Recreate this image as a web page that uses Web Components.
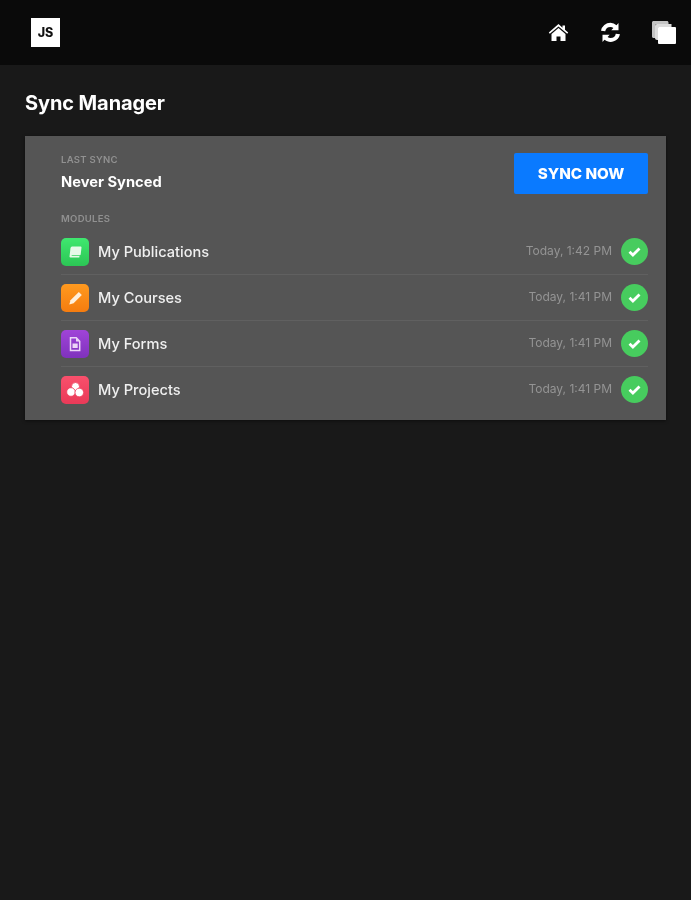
<!DOCTYPE html>
<html lang="en">
  <head>
    <meta charset="UTF-8" />
    <title>Sync Manager</title>
    <style>
      html, body { margin: 0; background: #191919; }
      body { font-family: Inter, "Liberation Sans", sans-serif; color: #fff; height: 900px; overflow: hidden; }
      app-header, sync-page { filter: blur(0.6px); }
    </style>
  </head>
  <body>
    <app-header></app-header>
    <sync-page title-text="Sync Manager">
      <sync-card last-sync="Never Synced">
        <module-row label="My Publications" time="Today, 1:42 PM" icon="book" tint="green"></module-row>
        <module-row label="My Courses" time="Today, 1:41 PM" icon="pencil" tint="orange"></module-row>
        <module-row label="My Forms" time="Today, 1:41 PM" icon="form" tint="purple"></module-row>
        <module-row label="My Projects" time="Today, 1:41 PM" icon="projects" tint="red"></module-row>
      </sync-card>
    </sync-page>

    <script>
      class AppHeader extends HTMLElement {
        constructor() {
          super()
          const shadow = this.attachShadow({ mode: "open" })
          shadow.innerHTML = `
            <style>
              :host { display: flex; align-items: center; justify-content: space-between; height: 65px; padding: 0 15px 0 31px; background: #0a0a0a; }
              .logo { width: 29px; height: 29px; background: #fff; color: #111; display: flex; align-items: center; justify-content: center; font: 800 12.5px Inter, sans-serif; }
              nav { display: flex; align-items: center; gap: 31px; }
              svg { display: block; fill: #fff; }
            </style>
            <div class="logo">JS</div>
            <nav>
              <svg width="21" height="19" viewBox="0 0 21 19"><path d="M10.5 1 .8 9.600l1 1.200 8.700-7.300 8.700 7.300 1-1.200-3.200-2.900V2.500h-2.500v2.300zM3.500 11v7h5v-4.500h4V18h5v-7l-7-6z"/></svg>
              <svg width="21" height="21" viewBox="0 0 21 21"><path d="M10.500 .8a9.700 9.700 0 0 0-9.500 8l4.200.5a5.400 5.400 0 0 1 5.300-4.300c1.100 0 2.100.3 2.900.9l-2.100 2.300h7.200V1l-2 2.200a9.600 9.600 0 0 0-6-2.400zM20 12.300l-4.200-.6a5.400 5.400 0 0 1-5.300 4.300c-1.100 0-2.100-.3-2.900-.9l2.100-2.300H2.500V20l2-2.200a9.700 9.700 0 0 0 15.500-5.500z"/></svg>
              <svg width="24" height="23" viewBox="0 0 24 23"><path fill="#c4c4c4" d="M0 1.500C0 .7.700 0 1.500 0H15c.8 0 1.500.7 1.500 1.500V3H5C3.900 3 3 3.900 3 5v12H1.500C.7 17 0 16.300 0 15.500z"/><path fill="#dcdcdc" d="M3 5C3 3.900 3.900 3 5 3h14.500v3H8C6.900 6 6 6.900 6 8v11H5c-1.100 0-2-.9-2-2z"/><rect x="6" y="6" width="18" height="17" rx="1"/></svg>
            </nav>
          `
        }
      }
      customElements.define("app-header", AppHeader)

      class SyncPage extends HTMLElement {
        constructor() {
          super()
          const shadow = this.attachShadow({ mode: "open" })
          shadow.innerHTML = `
            <style>
              :host { display: block; padding: 25px 25px 0; }
              h1 { margin: 0 0 20px; font: 700 20px/26px Inter, sans-serif; letter-spacing: -.1px; color: #fff; }
            </style>
            <h1></h1>
            <slot></slot>
          `
          shadow.querySelector("h1").textContent = this.getAttribute("title-text")
        }
      }
      customElements.define("sync-page", SyncPage)

      class SyncCard extends HTMLElement {
        constructor() {
          super()
          const shadow = this.attachShadow({ mode: "open" })
          shadow.innerHTML = `
            <style>
              :host { display: block; background: #555; padding: 18px 18px 7px 36px; box-shadow: 0 1px 3px rgba(0,0,0,.5); }
              .top { display: flex; justify-content: space-between; align-items: flex-start; margin-top: -1px; }
              .caption { font: 600 9.5px/12px Inter, sans-serif; color: #919191; letter-spacing: .3px; text-transform: uppercase; padding-top: 1px; }
              .status { margin-top: 6px; font: 700 14.7px/20px Inter, sans-serif; color: #fff; }
              button { width: 134px; height: 41px; border: 0; border-radius: 2px; background: #0a7aff; color: #fff; font: 800 15.2px Inter, sans-serif; padding: 0; }
              .modules { margin-top: 18px; }
              .list { margin-top: 4px; display: block; }
            </style>
            <div class="top">
              <div>
                <div class="caption">Last Sync</div>
                <div class="status"></div>
              </div>
              <button>SYNC NOW</button>
            </div>
            <div class="caption modules">Modules</div>
            <div class="list"><slot></slot></div>
          `
          shadow.querySelector(".status").textContent = this.getAttribute("last-sync")
        }
      }
      customElements.define("sync-card", SyncCard)

      const tints = {
        green: "linear-gradient(#3fe86f, #2cc655)",
        orange: "linear-gradient(#ff9a1f, #f57c0f)",
        purple: "linear-gradient(#a044d8, #7f32bd)",
        red: "linear-gradient(#f9506c, #e93a58)"
      }
      const icons = {
        book: `<path fill="#e6f9e9" d="M6.500 3.500h8c.6 0 1 .4 1 1l-.8 7c-.1.5-.4.8-.9.8H6.500c-.7 0-1.100.3-1.100.8h8.100l-.2 1.400H4.500c-.7 0-1.100-.4-1-1.100l1-8.300C4.700 4.200 5.500 3.500 6.500 3.500z"/>`,
        pencil: `<path fill="#fff0dc" d="M12.800 3 15.800 6 7.600 14.300 3.300 15.500 4.500 11.200z"/>`,
        form: `<path fill="none" stroke="#ecd5f7" stroke-width="1.500" d="M4.500 2.800h5.800l3.400 3.400v9.300H4.500z"/><path fill="#ecd5f7" d="M6.500 8.500h5.200v4.500H6.500zM10 2.800v3.700h3.700z"/>`,
        projects: `<g fill="#fff" stroke="#ee405e" stroke-width=".8"><circle cx="9.500" cy="5.500" r="4"/><circle cx="5" cy="11" r="4.300"/><circle cx="13.300" cy="11.500" r="4.300"/></g>`
      }

      class ModuleRow extends HTMLElement {
        constructor() {
          super()
          const shadow = this.attachShadow({ mode: "open" })
          shadow.innerHTML = `
            <style>
              :host { display: flex; align-items: center; height: 45px; border-bottom: 1px solid #606060; }
              :host(:last-child) { border-bottom-color: transparent; }
              .icon { width: 28px; height: 28px; border-radius: 5px; display: flex; align-items: center; justify-content: center; flex: none; }
              .icon svg { display: block; }
              .name { margin-left: 9px; font: 500 14.6px Inter, sans-serif; color: #f0f0f0; flex: 1; }
              .time { font: 400 12px Inter, sans-serif; color: #949494; margin: -2px 9px 0 0; }
              .check { width: 27px; height: 27px; flex: none; display: block; }
            </style>
            <div class="icon"><svg width="18" height="18" viewBox="0 0 18 18">${icons[this.getAttribute("icon")]}</svg></div>
            <span class="name"></span>
            <span class="time"></span>
            <svg class="check" viewBox="0 0 27 27"><circle cx="13.500" cy="13.500" r="13.500" fill="#47cc5e"/><path d="M8.500 13.800l3.400 3.200 6.600-6.500" fill="none" stroke="#fff" stroke-width="2.800"/></svg>
          `
          shadow.querySelector(".icon").style.background = tints[this.getAttribute("tint")]
          shadow.querySelector(".name").textContent = this.getAttribute("label")
          shadow.querySelector(".time").textContent = this.getAttribute("time")
        }
      }
      customElements.define("module-row", ModuleRow)
    </script>
  </body>
</html>
